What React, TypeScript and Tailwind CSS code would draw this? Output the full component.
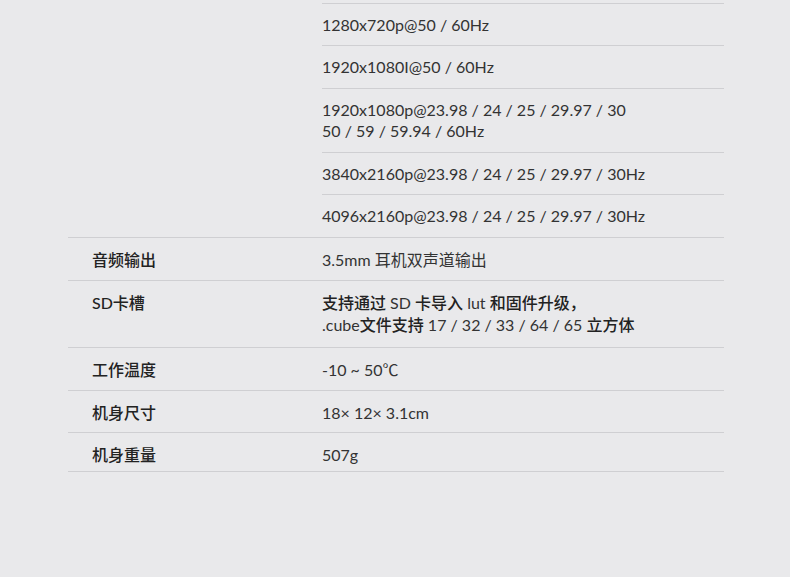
import React from "react";

const videoModes: { lines: string[]; h: string }[] = [
  { lines: ["1280x720p@50 / 60Hz"], h: "h-[42px]" },
  { lines: ["1920x1080I@50 / 60Hz"], h: "h-[43px]" },
  { lines: ["1920x1080p@23.98 / 24 / 25 / 29.97 / 30", "50 / 59 / 59.94 / 60Hz"], h: "h-[64px]" },
  { lines: ["3840x2160p@23.98 / 24 / 25 / 29.97 / 30Hz"], h: "h-[42px]" },
  { lines: ["4096x2160p@23.98 / 24 / 25 / 29.97 / 30Hz"], h: "h-[42px]" },
];

const Zh = ({ children }: { children: React.ReactNode }) => (
  <span className="font-medium text-[#222]">{children}</span>
);

const specs: { label: string; value: React.ReactNode[]; h: string; cls?: string }[] = [
  { label: "音频输出", value: ["3.5mm 耳机双声道输出"], h: "h-[43px]" },
  {
    label: "SD卡槽",
    value: [
      <>
        <Zh>支持通过</Zh> SD <Zh>卡导入</Zh> lut <Zh>和固件升级，</Zh>
      </>,
      <>
        .cube<Zh>文件支持</Zh> 17 / 32 / 33 / 64 / 65 <Zh>立方体</Zh>
      </>,
    ],
    h: "h-[67px]",
    cls: "pt-[11px] leading-[22px]",
  },
  { label: "工作温度", value: ["-10 ~ 50℃"], h: "h-[43px]" },
  { label: "机身尺寸", value: ["18× 12× 3.1cm"], h: "h-[42px]" },
  { label: "机身重量", value: ["507g"], h: "h-[39px]", cls: "pt-[11px]" },
];

const SpecRow = ({ label, value, h, cls }: { label: string; value: React.ReactNode[]; h: string; cls?: string }) => (
  <div className={`flex border-b border-[#cfcfd2] ${h}`}>
    <div className="w-[254px] shrink-0 pl-[24px] pt-[11px] font-medium text-[#222]">{label}</div>
    <div className={`flex-1 ${cls ?? "pt-[11px]"}`}>
      {value.map((line, i) => (
        <div key={i}>{line}</div>
      ))}
    </div>
  </div>
);

export default function App() {
  return (
    <div
      className="min-h-[577px] w-[790px] bg-[#e9e9eb] text-[16px] leading-[21px] text-[#333]"
      style={{ fontFamily: '"Lato", "Noto Sans CJK SC", sans-serif' }}
    >
      <div className="ml-[68px] w-[656px] pt-[3px]">
        <div className="flex border-b border-[#cfcfd2]">
          <div className="w-[254px] shrink-0" />
          <div className="flex-1 border-t border-[#cfcfd2]">
            {videoModes.map((row, i) => (
              <div
                key={i}
                className={`box-border pt-[10px] ${row.h} ${i < videoModes.length - 1 ? "border-b border-[#cfcfd2]" : ""}`}
              >
                {row.lines.map((l) => (
                  <div key={l}>{l}</div>
                ))}
              </div>
            ))}
          </div>
        </div>
        {specs.map((s) => (
          <SpecRow key={s.label} {...s} />
        ))}
      </div>
    </div>
  );
}
